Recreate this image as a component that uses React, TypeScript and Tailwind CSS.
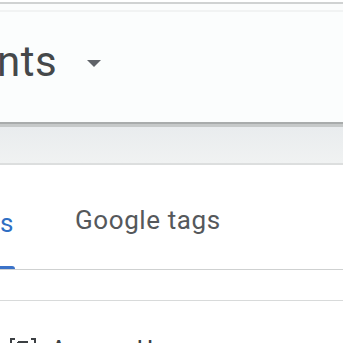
export default function App() {
  return (
    <div className="relative w-[343px] h-[343px] overflow-hidden bg-white font-['Roboto',sans-serif]">
      {/* top browser edge */}
      <div className="h-[2px] bg-white" />
      <div className="h-[2px] bg-[#d0d2d2]" />
      <div className="h-[6px] bg-[#fbfcfc]" />
      <div className="h-[2px] bg-[#f1f3f3]" />

      {/* page title */}
      <div className="h-[110px] bg-[#fbfdfd] pt-[29px]">
        <div className="flex items-start">
          <span className="ml-[-3px] text-[42px] leading-none text-[#45484a] tracking-[0.5px]">nts</span>
          <svg className="ml-[29px] mt-[18px]" width="16" height="9" viewBox="0 0 16 9">
            <path d="M1 1h14L8 8z" fill="#5f6368" />
          </svg>
        </div>
      </div>

      {/* header shadow + toolbar band */}
      <div className="h-[2px] bg-[#a9acac]" />
      <div className="h-[3px] bg-[#c6c9c9]" />
      <div className="h-[36px] bg-gradient-to-b from-[#e9ecee] to-[#f0f2f2]" />
      <div className="h-[2px] bg-[#dcdede]" />

      {/* tabs */}
      <div className="h-[104px] flex items-end">
        <div className="flex flex-col w-[15px]">
          <span className="text-[26px] leading-none text-[#2f6fc4] mb-[30px]">s</span>
          <div className="h-[3px] bg-[#3b72c8] rounded-tr-[3px]" />
        </div>
        <div className="ml-[60px] pb-[33px]">
          <span className="text-[26px] leading-none text-[#55585b] tracking-[0.6px]">Google tags</span>
        </div>
      </div>
      <div className="h-px bg-[#cfd1d1]" />

      <div className="h-[30px]" />
      <div className="h-px bg-[#d8dada]" />

      {/* table toolbar (cut off at the bottom edge) */}
      <div className="flex items-start pt-[37px] pl-[10px] text-[20px] leading-none text-[#3c4043]">
        <svg width="26" height="20" viewBox="0 0 26 20" fill="none" stroke="#3c4043" strokeWidth="2">
          <path d="M5 1H1v18h4M21 1h4v18h-4M8 4h10M8 4v12" />
        </svg>
        <span className="ml-[16px] font-medium">A</span>
        <span className="ml-[72px] font-medium">lıl</span>
      </div>
    </div>
  );
}
